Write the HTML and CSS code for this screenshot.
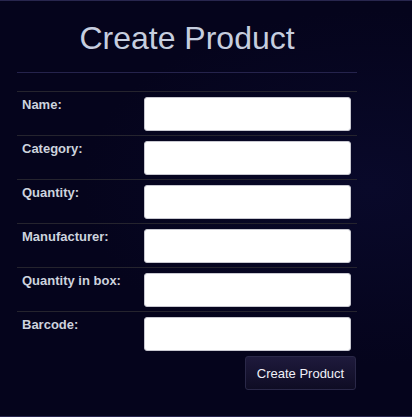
FILE: index.html
```html
<!DOCTYPE html>
<html>
<head>
<meta charset="utf-8">
<link rel="stylesheet" href="styles.css">
</head>
<body>
<div class="page">
  <div class="panel">
    <h1 class="title">Create Product</h1>
    <form class="form">
      <div class="row"><label class="label">Name:</label><input class="field" type="text"></div>
      <div class="row"><label class="label">Category:</label><input class="field" type="text"></div>
      <div class="row"><label class="label">Quantity:</label><input class="field" type="text"></div>
      <div class="row"><label class="label">Manufacturer:</label><input class="field" type="text"></div>
      <div class="row"><label class="label">Quantity in box:</label><input class="field" type="text"></div>
      <div class="row last"><label class="label">Barcode:</label><input class="field" type="text"></div>
      <div class="actions"><button class="btn" type="button">Create Product</button></div>
    </form>
  </div>
</div>
</body>
</html>
```
FILE: styles.css
```css
html, body {
  margin: 0;
  padding: 0;
  background: #05041c;
}
.page {
  box-sizing: border-box;
  height: 417px;
  border-top: 1px solid #28264e;
  border-bottom: 1px solid #28264e;
  background: radial-gradient(ellipse at 90% 45%, #09092a 0%, #05041c 55%);
  font-family: "Liberation Sans", Arial, sans-serif;
}
.panel {
  width: 340px;
  margin-left: 17px;
}
.title {
  margin: 0;
  height: 72px;
  box-sizing: border-box;
  padding-top: 19px;
  border-bottom: 1px solid #25234c;
  text-align: center;
  font-size: 32px;
  font-weight: normal;
  line-height: 37px;
  color: #c6cedf;
}
.form {
  margin: 0;
  padding-top: 18px;
}
.row {
  display: flex;
  align-items: flex-start;
  border-top: 1px solid #25242e;
  padding: 5px 5px 4px 5px;
  height: 34px;
}
.row.last {
  padding-bottom: 5px;
}
.label {
  width: 122px;
  font-size: 13px;
  font-weight: bold;
  color: #cdd3de;
}
.field {
  box-sizing: border-box;
  width: 207px;
  height: 34px;
  margin: 0;
  border: 1px solid #c8c8d0;
  border-radius: 3px;
  background: #ffffff;
}
.actions {
  display: flex;
  justify-content: flex-end;
  padding-right: 1px;
}
.btn {
  box-sizing: border-box;
  width: 111px;
  height: 34px;
  margin: 0;
  padding: 0;
  border: 1px solid #2a2848;
  border-radius: 3px;
  background: linear-gradient(#1e1a3c, #0e0c24);
  color: #f0f0f8;
  font-family: "Liberation Sans", Arial, sans-serif;
  font-size: 13px;
}
```
